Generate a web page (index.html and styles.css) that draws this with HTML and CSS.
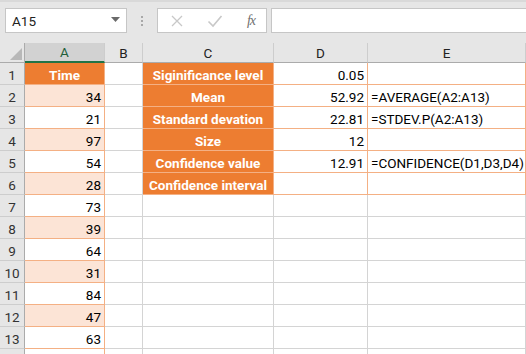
FILE: index.html
```html
<!DOCTYPE html>
<html>
<head>
<meta charset="utf-8">
<link rel="stylesheet" href="styles.css">
</head>
<body>
<div class="app">
  <div class="fbar">
    <div class="namebox"><span class="ref">A15</span><svg class="caret" width="9" height="5" viewBox="0 0 9 5"><polygon points="0,0 9,0 4.5,5" fill="#6a6a6a"/></svg></div>
    <div class="dots"><span></span><span></span><span></span></div>
    <div class="fnbox">
      <svg class="ico" width="14" height="14" viewBox="0 0 14 14"><path d="M2 2 L12 12 M12 2 L2 12" stroke="#c8c8c8" stroke-width="1.3" fill="none"/></svg>
      <svg class="ico" width="16" height="14" viewBox="0 0 16 14"><path d="M1.5 7.5 L6 12 L14.5 2" stroke="#c8c8c8" stroke-width="1.6" fill="none"/></svg>
      <span class="fx">fx</span>
    </div>
    <div class="finput"></div>
  </div>
  <div class="sheet">
    <div class="corner"><svg width="25" height="19" viewBox="0 0 25 19"><polygon points="10,17 22,5 22,17" fill="#b8b8b8"/></svg></div>
    <div class="ch sel">A</div><div class="ch">B</div><div class="ch">C</div><div class="ch">D</div><div class="ch">E</div>

    <div class="rh">1</div><div class="c a ahead">Time</div><div class="c b"></div><div class="c lab">Siginificance level</div><div class="c t num">0.05</div><div class="c t"></div>
    <div class="rh">2</div><div class="c a alt num">34</div><div class="c b"></div><div class="c lab">Mean</div><div class="c t num">52.92</div><div class="c t">=AVERAGE(A2:A13)</div>
    <div class="rh">3</div><div class="c a num">21</div><div class="c b"></div><div class="c lab">Standard devation</div><div class="c t num">22.81</div><div class="c t">=STDEV.P(A2:A13)</div>
    <div class="rh">4</div><div class="c a alt num">97</div><div class="c b"></div><div class="c lab">Size</div><div class="c t num">12</div><div class="c t"></div>
    <div class="rh">5</div><div class="c a num">54</div><div class="c b"></div><div class="c lab">Confidence value</div><div class="c t num">12.91</div><div class="c t">=CONFIDENCE(D1,D3,D4)</div>
    <div class="rh">6</div><div class="c a alt num">28</div><div class="c b"></div><div class="c lab">Confidence interval</div><div class="c t"></div><div class="c t"></div>
    <div class="rh">7</div><div class="c a num">73</div><div class="c b"></div><div class="c"></div><div class="c"></div><div class="c"></div>
    <div class="rh">8</div><div class="c a alt num">39</div><div class="c b"></div><div class="c"></div><div class="c"></div><div class="c"></div>
    <div class="rh">9</div><div class="c a num">64</div><div class="c b"></div><div class="c"></div><div class="c"></div><div class="c"></div>
    <div class="rh">10</div><div class="c a alt num">31</div><div class="c b"></div><div class="c"></div><div class="c"></div><div class="c"></div>
    <div class="rh">11</div><div class="c a num">84</div><div class="c b"></div><div class="c"></div><div class="c"></div><div class="c"></div>
    <div class="rh">12</div><div class="c a alt num">47</div><div class="c b"></div><div class="c"></div><div class="c"></div><div class="c"></div>
    <div class="rh">13</div><div class="c a num">63</div><div class="c b"></div><div class="c"></div><div class="c"></div><div class="c"></div>
    <div class="rh"></div><div class="c a"></div><div class="c b"></div><div class="c"></div><div class="c"></div><div class="c"></div>
  </div>
</div>
</body>
</html>
```
FILE: styles.css
```css
* { box-sizing: border-box; }
html, body { margin: 0; padding: 0; }
body {
  width: 526px;
  height: 354px;
  overflow: hidden;
  background: #e6e6e6;
  font-family: Roboto, "Liberation Sans", sans-serif;
  font-size: 13.5px;
  color: #000;
}
.app { display: flex; flex-direction: column; }
.fbar {
  height: 43px;
  display: flex;
  align-items: flex-start;
  padding-top: 8px;
  padding-left: 5px;
  border-top: 2px solid #d9d9d9;
  background: #e6e6e6;
}
.namebox {
  width: 122px;
  height: 25px;
  margin-top: -2px;
  background: #fff;
  border: 1px solid #c6c6c6;
  display: flex;
  align-items: center;
  justify-content: space-between;
  padding: 0 6px 0 6px;
  font-size: 13.5px;
  color: #222;
}
.caret { margin-top: -2px; }
.dots {
  width: 30px;
  height: 25px;
  margin-top: -2px;
  display: flex;
  flex-direction: column;
  align-items: center;
  justify-content: center;
  gap: 2px;
}
.dots span { width: 2px; height: 2px; background: #a8a8a8; }
.fnbox {
  width: 110px;
  height: 25px;
  margin-top: -2px;
  background: #fff;
  border: 1px solid #c6c6c6;
  display: flex;
  align-items: center;
  justify-content: space-between;
  padding: 0 11px 0 12px;
}
.fx {
  font-family: "Liberation Serif", serif;
  font-style: italic;
  font-size: 14px;
  color: #707070;
  letter-spacing: -1px;
}
.finput {
  flex: 1;
  height: 25px;
  margin-top: -2px;
  margin-left: 4px;
  background: #fff;
  border: 1px solid #c6c6c6;
  border-right: none;
}
.sheet {
  display: grid;
  grid-template-columns: 25px 80px 38px 131px 94px 1fr;
  grid-template-rows: 20px repeat(14, 22px);
  background: #fff;
}
.corner { background: #e6e6e6; border-right: 1px solid #ababab; border-bottom: 1px solid #ababab; }
.corner svg { display: block; }
.ch {
  background: #e6e6e6;
  border-right: 1px solid #cdcdcd;
  border-bottom: 1px solid #ababab;
  display: flex;
  align-items: center;
  justify-content: center;
  font-size: 13.5px;
  color: #222;
}
.ch.sel { background: #d2d2d2; border-bottom: 2px solid #217346; color: #1f5f3a; }
.rh {
  background: #e6e6e6;
  border-right: 1px solid #ababab;
  border-bottom: 1px solid #cdcdcd;
  display: flex;
  align-items: center;
  justify-content: center;
  font-size: 13.5px;
  color: #333;
  padding-top: 2px;
}
.c {
  border-right: 1px solid #d4d4d4;
  border-bottom: 1px solid #d4d4d4;
  display: flex;
  align-items: center;
  padding: 2px 3px 0 3px;
  white-space: nowrap;
  overflow: hidden;
}
.num { justify-content: flex-end; }
.a { border-right-color: #f4b084; border-bottom-color: #f4b084; }
.alt { background: #fce4d6; }
.ahead, .lab {
  background: #ed7d31;
  color: #fff;
  font-weight: bold;
  justify-content: center;
  border-right-color: #f4b084;
  border-bottom-color: #f4b084;
}
.t { border-right-color: #f4b084; border-bottom-color: #f4b084; }
```
